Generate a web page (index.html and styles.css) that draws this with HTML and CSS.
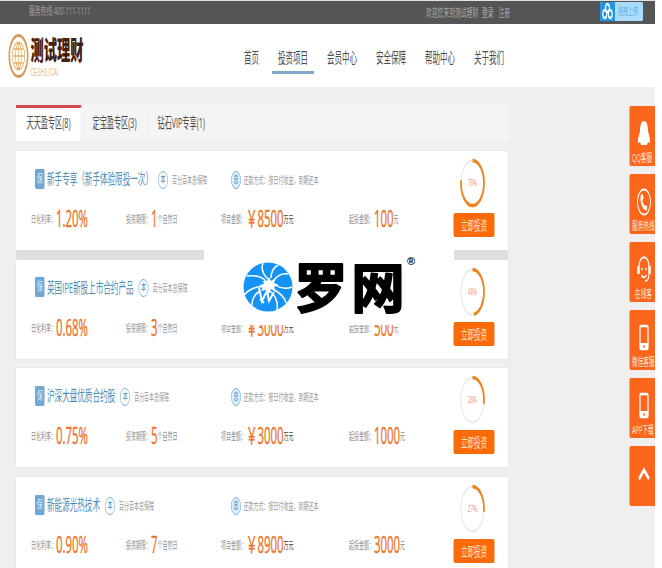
FILE: index.html
```
<!DOCTYPE html>
<html lang="zh-CN">
<head>
<meta charset="utf-8">
<title>测试理财</title>
<link rel="stylesheet" href="styles.css">
</head>
<body>
<div class="page">
  <div class="topbar">
    <span class="hotline">服务热线:400-111-1111</span>
    <span class="welcome">欢迎您来到测试理财</span><span class="link">登录</span><span class="link">注册</span>
    <div class="upload">
      <svg class="cloud" viewBox="0 0 30 19"><g fill="none" stroke="#fff" stroke-width="2.4"><circle cx="15" cy="6" r="4"/><circle cx="9.500" cy="12" r="4"/><circle cx="20.500" cy="12" r="4"/></g></svg>
      <span>拖拽上传</span>
    </div>
  </div>
  <header class="header">
    <svg class="globe" viewBox="0 0 42 44"><g fill="none"><ellipse cx="21" cy="22" rx="18.500" ry="20.500" stroke="#d39a58" stroke-width="3"/><ellipse cx="21" cy="22" rx="12.500" ry="13.500" stroke="#e3b069" stroke-width="1.500"/><path d="M21 8v28M9 22h24M11 15h20M11 29h20M21 8c-8 8-8 20 0 28M21 8c8 8 8 20 0 28" stroke="#e3b069" stroke-width="1.500"/></g></svg>
    <div class="brand"><b>测试理财</b><i>CESHILICAI</i></div>
    <nav class="nav"><a>首页</a><a class="on">投资项目</a><a>会员中心</a><a>安全保障</a><a>帮助中心</a><a>关于我们</a></nav>
  </header>
  <div class="tabs"><div class="tab active">天天盈专区(8)</div><div class="tab">定宝盈专区(3)</div><div class="tab">钻石VIP专享(1)</div></div>
  <main class="list">
    <section class="card first">
      <div class="info">
        <div class="head"><div class="name"><span class="bao">保</span><h2>新手专享（新手体验限投一次）</h2><span class="ring">本</span><small>百分百本息保障</small></div><div class="repay"><span class="ring">息</span><small>还款方式：按日付收益，到期还本</small></div></div>
        <div class="stats"><p>日化利率：<b>1.20%</b></p><p>投资期限：<b>1</b>个自然日</p><p>项目金额：<b>￥8500</b><em>万元</em></p><p>起投金额：<b>100</b>元</p></div>
      </div>
      <div class="action"><svg class="dial" viewBox="0 0 50 48"><ellipse class="track" cx="25" cy="24" rx="23" ry="22.500"/><ellipse class="arc" cx="25" cy="24" rx="22.500" ry="23" pathLength="100" stroke-dasharray="77 100" transform="rotate(-90 25 24)"/><text x="25" y="27">78%</text></svg><button>立即投资</button></div>
    </section>
    <section class="card">
      <div class="info">
        <div class="head"><div class="name"><span class="bao">保</span><h2>英国IPE新股上市合约产品</h2><span class="ring">本</span><small>百分百本息保障</small></div></div>
        <div class="stats"><p>日化利率：<b>0.68%</b></p><p>投资期限：<b>3</b>个自然日</p><p>项目金额：<b>￥3000</b><em>万元</em></p><p>起投金额：<b>500</b>元</p></div>
      </div>
      <div class="action"><svg class="dial" viewBox="0 0 50 48"><ellipse class="track" cx="25" cy="24" rx="23" ry="22.500"/><ellipse class="arc" cx="25" cy="24" rx="22.500" ry="23" pathLength="100" stroke-dasharray="48 100" transform="rotate(-90 25 24)"/><text x="25" y="27">48%</text></svg><button>立即投资</button></div>
    </section>
    <section class="card">
      <div class="info">
        <div class="head"><div class="name"><span class="bao">保</span><h2>沪深大盘优质合约股</h2><span class="ring">本</span><small>百分百本息保障</small></div><div class="repay"><span class="ring">息</span><small>还款方式：按日付收益，到期还本</small></div></div>
        <div class="stats"><p>日化利率：<b>0.75%</b></p><p>投资期限：<b>5</b>个自然日</p><p>项目金额：<b>￥3000</b><em>万元</em></p><p>起投金额：<b>1000</b>元</p></div>
      </div>
      <div class="action"><svg class="dial" viewBox="0 0 50 48"><ellipse class="track" cx="25" cy="24" rx="23" ry="22.500"/><ellipse class="arc" cx="25" cy="24" rx="22.500" ry="23" pathLength="100" stroke-dasharray="28 100" transform="rotate(-90 25 24)"/><text x="25" y="27">28%</text></svg><button>立即投资</button></div>
    </section>
    <section class="card">
      <div class="info">
        <div class="head"><div class="name"><span class="bao">保</span><h2>新能源光热技术</h2><span class="ring">本</span><small>百分百本息保障</small></div><div class="repay"><span class="ring">息</span><small>还款方式：按日付收益，到期还本</small></div></div>
        <div class="stats"><p>日化利率：<b>0.90%</b></p><p>投资期限：<b>7</b>个自然日</p><p>项目金额：<b>￥8900</b><em>万元</em></p><p>起投金额：<b>3000</b>元</p></div>
      </div>
      <div class="action"><svg class="dial" viewBox="0 0 50 48"><ellipse class="track" cx="25" cy="24" rx="23" ry="22.500"/><ellipse class="arc" cx="25" cy="24" rx="22.500" ry="23" pathLength="100" stroke-dasharray="27 100" transform="rotate(-90 25 24)"/><text x="25" y="27">27%</text></svg><button>立即投资</button></div>
    </section>
  </main>
  <aside class="side">
    <div class="tool"><svg viewBox="0 0 30 30"><path fill="#fff" d="M15 2C9 2 7 7 7 12L3 20v4l4-1 2 3h12l2-3 4 1v-4l-4-8C23 7 21 2 15 2z"/></svg><span>QQ客服</span></div>
    <div class="tool"><svg viewBox="0 0 30 30"><g fill="none" stroke="#fff"><ellipse cx="15" cy="15" rx="13" ry="12.500" stroke-width="1.800"/><path d="M11 8c-4 5 2 13 9 14" stroke-width="3.500"/><path d="M10 8l3 4M16 20l5 1" stroke-width="4"/></g></svg><span>服务热线</span></div>
    <div class="tool"><svg viewBox="0 0 30 30"><g fill="none" stroke="#fff" stroke-width="2"><path d="M5 12C5-1 25-1 25 12M25 19c0 5-4 7-8 7M10 20c3 3 7 3 10 0"/><path d="M4 11v8M26 11v8" stroke-width="5"/></g><circle cx="11" cy="14" r="1.500" fill="#fff"/><circle cx="19" cy="14" r="1.500" fill="#fff"/></svg><span class="short">在线客</span></div>
    <div class="tool"><svg viewBox="0 0 30 30"><rect x="7" y="3" width="16" height="23" rx="2" fill="none" stroke="#fff" stroke-width="2.500"/><path fill="#fff" d="M7 20h16v6H7z"/><circle cx="15" cy="23.500" r="1.500" fill="#fb661c"/></svg><span>微信客服</span></div>
    <div class="tool"><svg viewBox="0 0 30 30"><rect x="7" y="3" width="16" height="23" rx="2" fill="none" stroke="#fff" stroke-width="2.500"/><path fill="#fff" d="M7 20h16v6H7z"/><circle cx="15" cy="23.500" r="1.500" fill="#fb661c"/></svg><span>APP下载</span></div>
    <div class="tool"><svg viewBox="0 0 30 30"><path d="M5 20L15 11l10 9" fill="none" stroke="#fff" stroke-width="4"/></svg></div>
  </aside>
</div>
<div class="mark">
  <svg class="ball" viewBox="0 0 50 52"><circle cx="25" cy="26" r="24.500" fill="#1593f5"/><g fill="none" stroke="#fff" stroke-width="1.500"><path d="M23 20C18 15 11 14 4 15M25 18C19 12 18 7 20 2M28 17c0-6 2-10 7-13M31 19c4-5 9-7 14-6M32 24c6 4 12 4 17 2M30 28c7 4 12 8 13 14M27 30c7 6 8 13 7 19M20 26C13 25 5 29 1 34M17 30c-5 3-8 8-8 14"/></g><path fill="#fff" d="M20 20l4 0 2-4 2 4 5-3-2 5 5 2-5 2 2 5-5-3-2 5-3-4-5 1 2-4-4-2 5-1z"/><path d="M16 27l3 13 5-10 2 10 5-9M17 38l4 4" fill="none" stroke="#fff" stroke-width="2"/></svg>
  <svg class="word" viewBox="0 0 114 60"><text x="1.500" y="50">罗</text><text x="58.500" y="50">网</text></svg>
  <sup>®</sup>
</div>
</body>
</html>
```
FILE: styles.css
```
* { box-sizing: border-box; margin: 0; padding: 0; }
html { background: #fff; overflow: hidden; height: 568px; }
body { width: 662px; height: 568px; overflow: hidden; position: relative; font-family: "Open Sans", "Noto Sans CJK SC", sans-serif; }

/* The page is laid out at double width and condensed horizontally. */
.page { width: 1310px; height: 568px; overflow: hidden; background: #efefef; transform: scaleX(.5); transform-origin: 0 0; position: relative; }
.page svg { display: block; flex: none; }

.topbar { height: 24px; background: #555; border-top: 1px solid #dce5e0; display: flex; align-items: center; color: #aaa; font-size: 11.600px; line-height: 20px; padding-left: 58px; }
.hotline { width: 794px; color: #a0a0a0; margin-top: -3px; }
.welcome { width: 112px; }
.link { width: 33px; }
.upload { display: flex; width: 86px; height: 19px; margin: -3px 0 0 170px; background: #a9ddfb; border-radius: 2px; align-items: center; color: #65b1e2; font-size: 10px; overflow: hidden; }
.cloud { width: 30px; height: 19px; background: #2397e5; margin-right: 6px; }

.header { height: 63px; background: #fff; display: flex; padding-left: 16px; }
.globe { width: 42px; height: 44px; margin-top: 10px; }
.brand { margin: 10px 0 0 3px; width: 415px; display: flex; flex-direction: column; }
.brand b { font-size: 26.500px; line-height: 32px; font-weight: 900; color: #46200f; }
.brand i { font: 10px/12px "Liberation Sans", sans-serif; color: #e6bd8c; margin-top: 1px; }
.nav { display: flex; gap: 14px; }
.nav a { height: 50px; padding: 21px 12px 0; font-size: 15px; line-height: 24px; color: #4c4c4c; }
.nav a { width: 84px; white-space: nowrap; }
.nav a:first-child { width: 54px; }
.nav .on { border-bottom: 3px solid #82a9cb; }

.tabs { margin: 18px 0 0 32px; width: 986px; height: 36px; background: #f4f4f4; display: flex; }
.tab { width: 132px; padding-left: 22px; font-size: 14.300px; line-height: 36px; color: #4c4c4c; white-space: nowrap; border-right: 2px solid #f0f0f0; }
.tab.active { width: 131px; background: #fff; border-top: 3px solid #d14b58; line-height: 30px; padding-left: 21px; }
.tab:last-child { width: 150px; padding-left: 20px; }

.list { margin: 10px 0 0 32px; width: 984px; display: flex; flex-direction: column; gap: 9.700px; }
.card { height: 99px; background: #fff; display: flex; flex: none; box-shadow: 0 0 3px #dedede; }
.card.first { box-shadow: 0 0 2px #ddd, 0 9.700px 0 #dedede; }
.info { width: 874px; }
.head { height: 55px; display: flex; align-items: center; }
.name { width: 392px; padding-left: 38px; display: flex; align-items: center; height: 20px; }
.repay { margin-top: 2px; display: flex; align-items: center; padding-left: 38px; }
.bao { width: 19px; height: 20px; border-radius: 2px; background: #70a8d5; color: #d2e9fb; font-size: 12px; line-height: 19px; text-align: center; flex: none; margin-right: 5px; }
h2 { font-size: 15.200px; font-weight: 400; color: #4c8fb8; white-space: nowrap; line-height: 20px; margin-top: -1px; letter-spacing: -.05px; }
.ring { width: 20px; height: 18px; border: 1.500px solid #6da9cf; border-radius: 50%; color: #4289b8; font-size: 10px; line-height: 14px; text-align: center; flex: none; margin: 2px 0 0 10px; }
.repay .ring { margin: 0; background: #ddeefa; }
small { font-size: 10px; color: #999; white-space: nowrap; margin: 2px 0 0 8px; line-height: 18px; }
.repay small { margin: 0 0 0 5px; }
.stats { display: grid; grid-template-columns: 190px 190px 256px 200px; padding-left: 30px; height: 26px; align-items: center; }
.stats p { display: flex; align-items: center; font-size: 10px; color: #8f8f8f; white-space: nowrap; line-height: 26px; }
.stats b { font-size: 22.800px; font-weight: 400; color: #ec7428; line-height: 26px; -webkit-text-stroke: .4px #ec7428; }
.stats em { font-style: normal; color: #444; }

.action { width: 84px; display: flex; flex-direction: column; align-items: center; padding-top: 8px; }
.dial { width: 50px; height: 48px; overflow: visible; margin-left: -6px; }
.dial ellipse { fill: none; }
.track { stroke: #ececec; stroke-width: 2.500; }
.arc { stroke: #ea8520; stroke-width: 3.500; }
.dial text { font-size: 9.500px; fill: #ef9070; text-anchor: middle; }
button { width: 82px; height: 24px; margin-top: 6px; border: 0; border-radius: 3px; background: #fb6a08; color: #ffe3cc; font: 13px/24px "Noto Sans CJK SC", sans-serif; }

.side { position: absolute; right: 0; top: 106px; width: 51px; display: flex; flex-direction: column; gap: 8px; }
.tool { height: 60px; background: #fb661c; border-radius: 3px 0 0 3px; overflow: hidden; padding: 13px 0 0 5px; color: #ffe8dc; }
.tool svg { width: 30px; height: 30px; margin-left: 9px; }
.tool span { display: block; font-size: 11.300px; line-height: 16px; margin-top: 1px; white-space: nowrap; }
.tool .short { margin-left: 6px; }

/* Watermark laid over the list */
.mark { position: absolute; left: 204px; top: 248px; width: 250px; height: 77px; background: #fff; display: flex; padding-left: 39px; }
.ball { width: 50px; height: 52px; margin-top: 13px; }
.word { width: 114px; height: 60px; margin-top: 10px; overflow: visible; }
.word text { font: 700 53px "Noto Sans CJK SC", sans-serif; fill: #000; stroke: #000; stroke-width: 2px; stroke-linejoin: round; }
.mark sup { font: bold 11px/14px "Liberation Sans", sans-serif; margin-top: 6px; }
```
